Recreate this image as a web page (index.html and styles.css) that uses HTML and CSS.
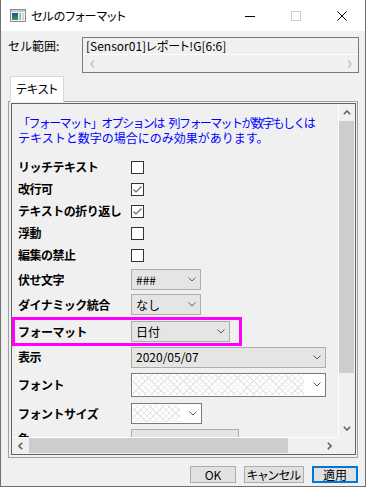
FILE: index.html
```html
<!DOCTYPE html>
<html lang="ja">
  <head>
    <meta charset="UTF-8" />
    <title>セルのフォーマット</title>
    <link rel="stylesheet" href="styles.css">
  </head>
  <body>
    <div class="window">
      <div class="titlebar">
        <svg class="app-icon" width="16" height="13" viewBox="0 0 16 13">
          <defs>
            <linearGradient id="pane" x1="0" y1="0" x2="0" y2="1">
              <stop offset="0" stop-color="#1d4f8f" />
              <stop offset="1" stop-color="#3d9470" />
            </linearGradient>
          </defs>
          <rect x="0.5" y="0.5" width="15" height="12" fill="#f4f4f4" stroke="#8c8c8c" />
          <rect x="1" y="1" width="14" height="2" fill="#c9c9c9" />
          <rect x="2" y="4" width="6" height="7" fill="url(#pane)" />
          <rect x="9" y="4" width="2" height="7" fill="#93c9a4" />
          <rect x="12" y="4" width="2" height="7" fill="#d4d4d4" />
        </svg>
        <span class="title">セルのフォーマット</span>
        <div class="caption">
          <span class="cap">
            <svg width="10" height="10" viewBox="0 0 10 10"><rect x="0" y="5" width="10" height="1" fill="#000" /></svg>
          </span>
          <span class="cap">
            <svg width="10" height="10" viewBox="0 0 10 10"><rect x="0.5" y="0.5" width="9" height="9" fill="none" stroke="#cccccc" /></svg>
          </span>
          <span class="cap">
            <svg width="10" height="10" viewBox="0 0 10 10"><path d="M0.5 0.5 L9.5 9.5 M9.5 0.5 L0.5 9.5" stroke="#000" stroke-width="1" /></svg>
          </span>
        </div>
      </div>

      <div class="dialog">
        <div class="range-row">
          <span class="range-label">セル範囲:</span>
          <div class="range-box">
            <div class="range-text">[Sensor01]レポート!G[6:6]</div>
            <div class="range-scroll">
              <svg width="5" height="8" viewBox="0 0 5 8"><polyline points="4,0.5 1,4 4,7.5" fill="none" stroke="#c2c2c2" stroke-width="1.5" /></svg>
              <svg width="5" height="8" viewBox="0 0 5 8"><polyline points="1,0.5 4,4 1,7.5" fill="none" stroke="#c2c2c2" stroke-width="1.5" /></svg>
            </div>
          </div>
        </div>

        <div class="tabs">
          <span class="tab">テキスト</span>
        </div>

        <div class="panel">
          <div class="viewer">
            <div class="viewer-main">
              <div class="content">
                <p class="note">
                  <span class="note-line tight"><span class="gap">「フォーマット」オプションは</span>列フォーマットが数字もしくは</span>
                  <span class="note-line">テキストと数字の場合にのみ効果があります。</span>
                </p>

                <div class="row"><span class="label">リッチテキスト</span><span class="box"></span></div>
                <div class="row">
                  <span class="label">改行可</span>
                  <span class="box"><svg width="11" height="11" viewBox="0 0 11 11"><polyline points="1.5,5.5 4,8 9.5,2.5" fill="none" stroke="#666" stroke-width="1.1" /></svg></span>
                </div>
                <div class="row">
                  <span class="label">テキストの折り返し</span>
                  <span class="box"><svg width="11" height="11" viewBox="0 0 11 11"><polyline points="1.5,5.5 4,8 9.5,2.5" fill="none" stroke="#666" stroke-width="1.1" /></svg></span>
                </div>
                <div class="row"><span class="label">浮動</span><span class="box"></span></div>
                <div class="row"><span class="label">編集の禁止</span><span class="box"></span></div>

                <div class="row row-mask">
                  <span class="label">伏せ文字</span>
                  <div class="combo w70">
                    <span class="val">###</span>
                    <svg class="chev" width="8" height="5" viewBox="0 0 8 5"><polyline points="0.5,0.5 4,4 7.5,0.5" fill="none" stroke="#5a5a5a" /></svg>
                  </div>
                </div>
                <div class="row row-merge">
                  <span class="label">ダイナミック統合</span>
                  <div class="combo w70">
                    <span class="val">なし</span>
                    <svg class="chev" width="8" height="5" viewBox="0 0 8 5"><polyline points="0.5,0.5 4,4 7.5,0.5" fill="none" stroke="#5a5a5a" /></svg>
                  </div>
                </div>
                <div class="row row-format">
                  <span class="label">フォーマット</span>
                  <div class="combo w99">
                    <span class="val">日付</span>
                    <svg class="chev" width="8" height="5" viewBox="0 0 8 5"><polyline points="0.5,0.5 4,4 7.5,0.5" fill="none" stroke="#5a5a5a" /></svg>
                  </div>
                </div>
                <div class="row row-show">
                  <span class="label">表示</span>
                  <div class="combo w195">
                    <span class="val">2020/05/07</span>
                    <svg class="chev" width="8" height="5" viewBox="0 0 8 5"><polyline points="0.5,0.5 4,4 7.5,0.5" fill="none" stroke="#5a5a5a" /></svg>
                  </div>
                </div>
                <div class="row row-font">
                  <span class="label">フォント</span>
                  <div class="combo edit w195 tall">
                    <span class="hatch"></span>
                    <svg class="chev" width="8" height="5" viewBox="0 0 8 5"><polyline points="0.5,0.5 4,4 7.5,0.5" fill="none" stroke="#5a5a5a" /></svg>
                  </div>
                </div>
                <div class="row row-size">
                  <span class="label">フォントサイズ</span>
                  <div class="combo edit w71">
                    <span class="hatch"></span>
                    <svg class="chev" width="8" height="5" viewBox="0 0 8 5"><polyline points="0.5,0.5 4,4 7.5,0.5" fill="none" stroke="#5a5a5a" /></svg>
                  </div>
                </div>
                <div class="row row-color">
                  <span class="label">色</span>
                  <div class="combo w108"></div>
                </div>
              </div>

              <div class="vscroll">
                <span class="arrow">
                  <svg width="8" height="5" viewBox="0 0 8 5"><polyline points="0.8,4.2 4,1 7.2,4.2" fill="none" stroke="#606060" stroke-width="1.6" /></svg>
                </span>
                <span class="vthumb"></span>
                <span class="arrow push">
                  <svg width="8" height="5" viewBox="0 0 8 5"><polyline points="0.8,0.8 4,4 7.2,0.8" fill="none" stroke="#606060" stroke-width="1.6" /></svg>
                </span>
              </div>
            </div>

            <div class="hscroll-row">
              <div class="hscroll">
                <span class="arrow">
                  <svg width="5" height="8" viewBox="0 0 5 8"><polyline points="4.2,0.8 1,4 4.2,7.2" fill="none" stroke="#606060" stroke-width="1.6" /></svg>
                </span>
                <span class="hthumb"></span>
                <span class="arrow push">
                  <svg width="5" height="8" viewBox="0 0 5 8"><polyline points="0.8,0.8 4,4 0.8,7.2" fill="none" stroke="#606060" stroke-width="1.6" /></svg>
                </span>
              </div>
              <div class="corner"></div>
            </div>
          </div>
        </div>

        <div class="buttons">
          <span class="btn w46">OK</span>
          <span class="btn w60">キャンセル</span>
          <span class="btn w46 default">適用</span>
        </div>
      </div>
    </div>
  </body>
</html>
```

FILE: styles.css
```css
body {
  margin: 0;
  background: #ffffff;
  font-family: "Noto Sans CJK JP", "Noto Sans", sans-serif;
  font-size: 12px;
  color: #000;
}

.window {
  width: 366px;
  height: 487px;
  box-sizing: border-box;
  border: 1px solid #707070;
  border-top: none;
  background: #f0f0f0;
  display: flex;
  flex-direction: column;
}

/* title bar */
.titlebar {
  height: 31px;
  flex: none;
  background: #ffffff;
  display: flex;
  align-items: center;
}
.app-icon {
  margin-left: 9px;
  flex: none;
}
.title {
  margin-left: 5px;
  line-height: 16px;
  font-feature-settings: "palt";
}
.caption {
  margin-left: auto;
  height: 100%;
  display: flex;
}
.cap {
  width: 46px;
  display: flex;
  align-items: center;
  justify-content: center;
}

/* dialog body */
.dialog {
  flex: 1;
  display: flex;
  flex-direction: column;
}
.range-row {
  display: flex;
  margin: 6px 0 0 7px;
}
.range-label {
  width: 74px;
  line-height: 17px;
}
.range-box {
  width: 277px;
  height: 36px;
  box-sizing: border-box;
  border: 1px solid #7a7a7a;
  display: flex;
  flex-direction: column;
}
.range-text {
  height: 16px;
  line-height: 16px;
  padding-left: 3px;
  font-feature-settings: "palt";
}
.range-scroll {
  height: 17px;
  border-top: 1px solid #ffffff;
  display: flex;
  align-items: center;
  justify-content: space-between;
  padding: 0 6px 0 7px;
}

.tabs {
  display: flex;
  margin: 3px 0 0 9px;
}
.tab {
  width: 54px;
  height: 26px;
  box-sizing: border-box;
  border: 1px solid #d9d9d9;
  border-bottom: none;
  background: #ffffff;
  padding-left: 5px;
  line-height: 24px;
  margin-bottom: -1px;
  position: relative;
  z-index: 1;
  font-feature-settings: "palt";
}

.panel {
  margin-left: 7px;
  width: 350px;
  height: 357px;
  box-sizing: border-box;
  border: 1px solid #a0a0a0;
  padding: 1px 1px 2px 2px;
}
.viewer {
  height: 352px;
  box-sizing: border-box;
  border: 1px solid #646464;
  display: flex;
  flex-direction: column;
}
.viewer-main {
  flex: 1;
  min-height: 0;
  display: flex;
}
.content {
  flex: 1;
  overflow: hidden;
}

.note {
  margin: 0 0 11px 0;
  padding: 11px 0 0 6px;
  color: #0000ff;
  line-height: 15px;
}
.note-line {
  display: block;
  white-space: nowrap;
}
.note-line.tight {
  letter-spacing: -1.6px;
}
.note-line .gap {
  margin-right: 5px;
}

.row {
  height: 22px;
  padding-left: 6px;
  display: flex;
  align-items: center;
}
.label {
  width: 113px;
  flex: none;
  font-weight: 700;
  line-height: 16px;
  letter-spacing: -0.5px;
  white-space: nowrap;
}
.row-mask { height: 27px; }
.row-merge { height: 23px; }
.row-format {
  width: 230px;
  height: 29px;
  box-sizing: border-box;
  margin-top: 1px;
  padding-left: 3px;
  border: 3px solid #ff00ff;
}
.row-show { height: 22px; }
.row-font { height: 33px; }
.row-size { height: 25px; }
.row-color { height: 26px; }

.box {
  width: 13px;
  height: 13px;
  box-sizing: border-box;
  border: 1px solid #333333;
  background: #ffffff;
  display: flex;
  align-items: center;
  justify-content: center;
}

.combo {
  height: 21px;
  box-sizing: border-box;
  border: 1px solid #adadad;
  background: #e5e5e5;
  padding: 0 4px 0 4px;
  display: flex;
  align-items: center;
}
.combo .val {
  flex: 1;
  line-height: 16px;
  white-space: nowrap;
}
.combo .chev {
  flex: none;
}
.combo.edit {
  background: #ffffff;
  border-color: #7a7a7a;
  padding: 1px 4px 1px 1px;
  align-items: stretch;
}
.combo.edit .chev {
  align-self: center;
}
.combo.tall { height: 24px; }
.hatch {
  flex: 1;
  margin-right: 9px;
  background-image:
    repeating-linear-gradient(45deg, #e6e6e6 0 1px, transparent 1px 4.5px),
    repeating-linear-gradient(-45deg, #e6e6e6 0 1px, transparent 1px 4.5px);
}
.w70 { width: 70px; }
.w71 { width: 71px; }
.w99 { width: 99px; }
.w108 { width: 108px; }
.w195 { width: 195px; }

/* scroll bars */
.vscroll {
  width: 17px;
  flex: none;
  box-sizing: border-box;
  border-left: 1px solid #ffffff;
  display: flex;
  flex-direction: column;
  align-items: center;
}
.vscroll .arrow {
  height: 17px;
  flex: none;
  display: flex;
  align-items: center;
}
.vthumb {
  width: 15px;
  height: 252px;
  align-self: flex-start;
  background: #cdcdcd;
}
.push {
  margin-top: auto;
}
.hscroll-row {
  height: 17px;
  flex: none;
  display: flex;
}
.hscroll {
  flex: 1;
  box-sizing: border-box;
  border-top: 1px solid #ffffff;
  display: flex;
  align-items: center;
}
.hscroll .arrow {
  width: 17px;
  flex: none;
  display: flex;
  justify-content: center;
}
.hscroll .push {
  margin-top: 0;
  margin-left: auto;
}
.hthumb {
  width: 259px;
  height: 15px;
  align-self: flex-start;
  background: #cdcdcd;
}
.corner {
  width: 17px;
  flex: none;
}

/* buttons */
.buttons {
  width: 350px;
  margin: 8px 0 0 7px;
  display: flex;
  justify-content: flex-end;
  gap: 8px;
}
.btn {
  height: 17px;
  box-sizing: border-box;
  border: 1px solid #adadad;
  background: #e1e1e1;
  display: flex;
  align-items: center;
  justify-content: center;
  line-height: 15px;
  font-feature-settings: "palt";
}
.btn.default {
  border: 2px solid #0078d7;
}
.w46 { width: 46px; }
.w60 { width: 60px; }
```
